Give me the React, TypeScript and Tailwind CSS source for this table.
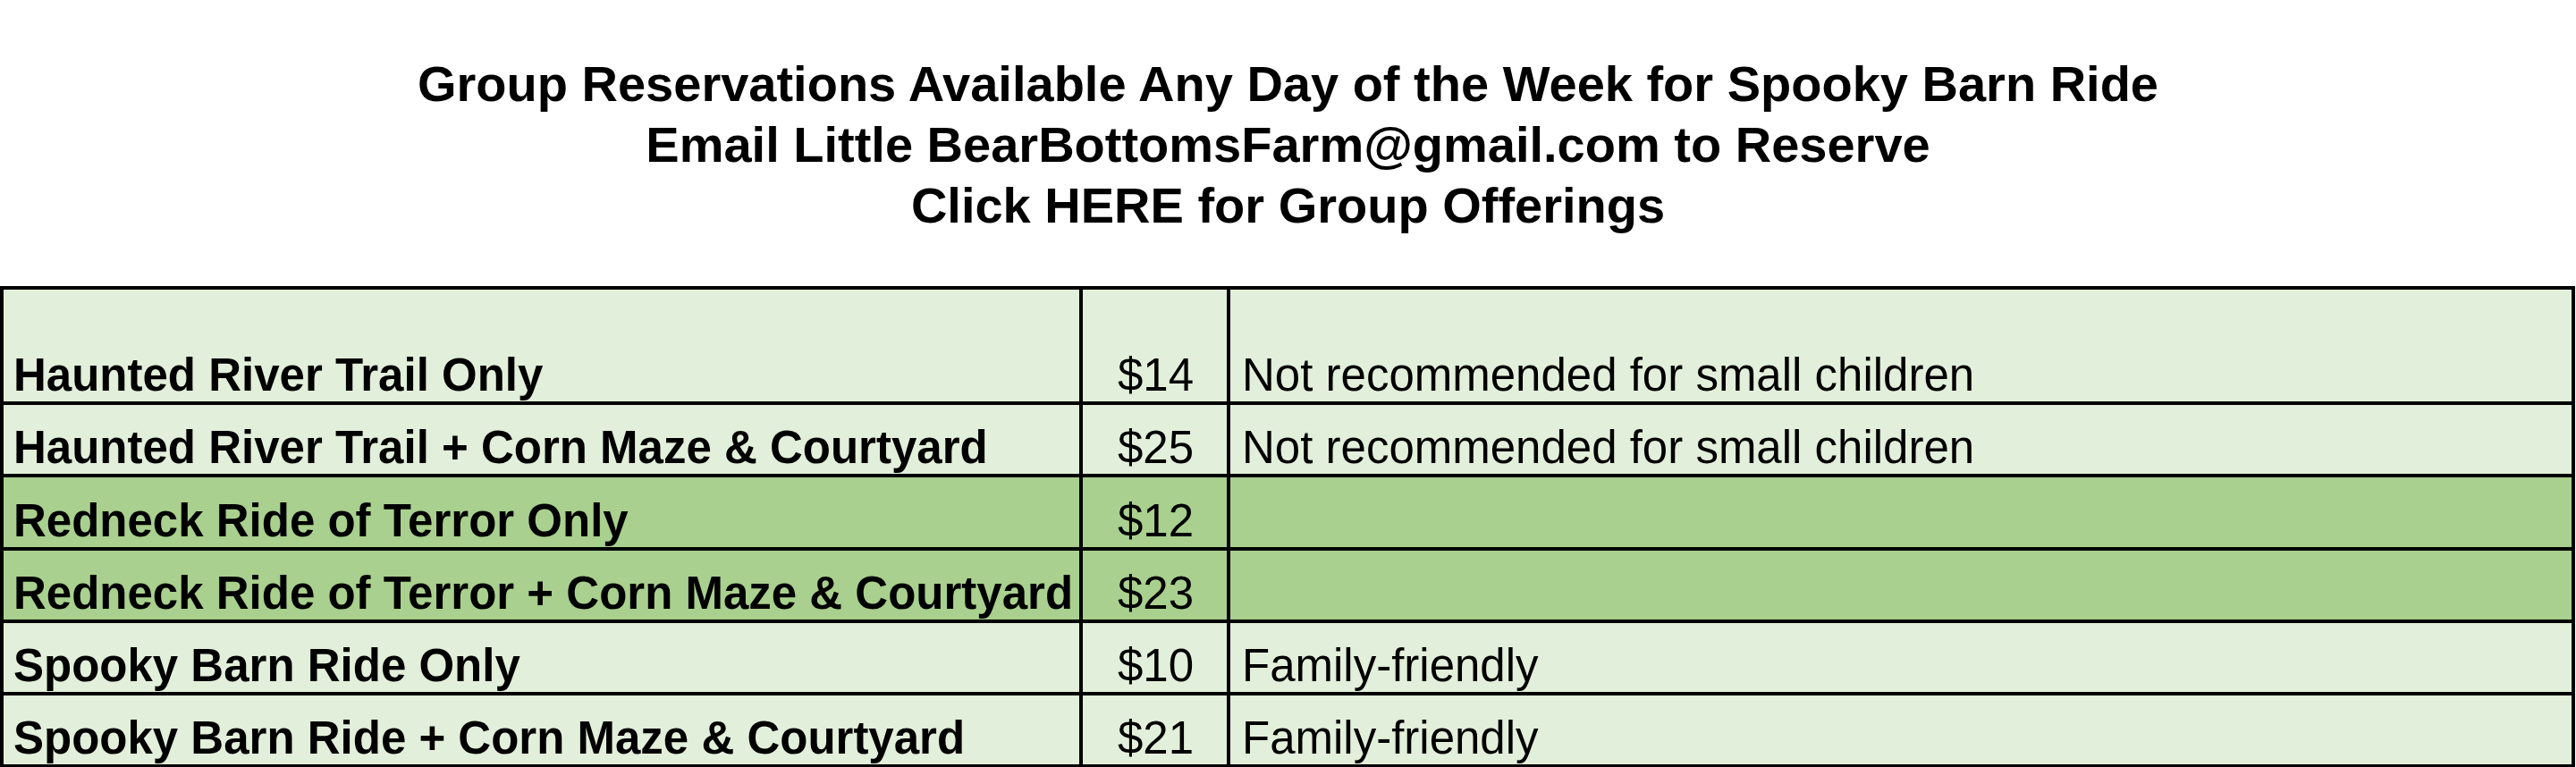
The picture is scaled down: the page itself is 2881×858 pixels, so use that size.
const rows = [
  { name: "Haunted River Trail Only", price: "$14", note: "Not recommended for small children", dark: false },
  { name: "Haunted River Trail + Corn Maze & Courtyard", price: "$25", note: "Not recommended for small children", dark: false },
  { name: "Redneck Ride of Terror Only", price: "$12", note: "", dark: true },
  { name: "Redneck Ride of Terror + Corn Maze & Courtyard", price: "$23", note: "", dark: true },
  { name: "Spooky Barn Ride Only", price: "$10", note: "Family-friendly", dark: false },
  { name: "Spooky Barn Ride + Corn Maze & Courtyard", price: "$21", note: "Family-friendly", dark: false },
];

export default function App() {
  return (
    <div
      className="h-[858px] w-full overflow-hidden bg-white text-black"
      style={{ fontFamily: '"Liberation Sans", Arial, sans-serif' }}
    >
      {/* Header */}
      <div className="pt-[60px] text-center text-[56px] font-bold leading-[68px]">
        <p>Group Reservations Available Any Day of the Week for Spooky Barn Ride</p>
        <p>Email Little BearBottomsFarm@gmail.com to Reserve</p>
        <p>Click HERE for Group Offerings</p>
      </div>

      {/* Price table */}
      <div className="mt-[56px] grid w-[2880px] grid-cols-[1203px_161px_1fr] grid-rows-[125px_77px_78px_77px_77px_77px] gap-[4px] bg-black p-[4px] text-[51px] leading-[57px]">
        {rows.map((r) => {
          const bg = r.dark ? "bg-[#a9d08e]" : "bg-[#e2efda]";
          return [
            <div key={r.name + "-n"} className={`${bg} flex items-end pb-[1px] pl-[11px] font-bold whitespace-nowrap`}>
              {r.name}
            </div>,
            <div key={r.name + "-p"} className={`${bg} flex items-end justify-center pb-[1px] pl-[2px]`}>
              {r.price}
            </div>,
            <div key={r.name + "-d"} className={`${bg} flex items-end pb-[1px] pl-[13px] whitespace-nowrap`}>
              {r.note}
            </div>,
          ];
        })}
      </div>
    </div>
  );
}
